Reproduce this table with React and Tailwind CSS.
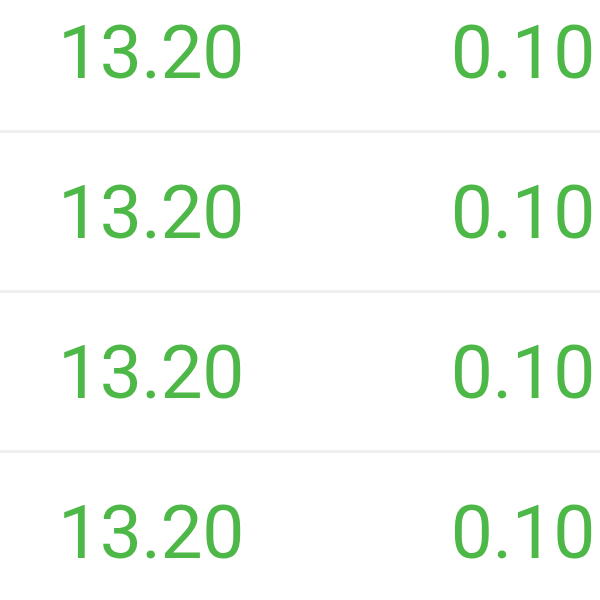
const rows = [
  { price: "13.20", change: "0.10" },
  { price: "13.20", change: "0.10" },
  { price: "13.20", change: "0.10" },
  { price: "13.20", change: "0.10" },
];

export default function App() {
  return (
    <div className="w-[600px] h-[600px] overflow-hidden bg-white">
      <div className="-mt-[27px]">
        {rows.map((row, i) => (
          <div
            key={i}
            className="flex h-[160px] items-center justify-between border-b-[3px] border-[#f0f0f0] pt-[1px] pl-[58px] pr-[5px] text-[75px] leading-none tracking-[-0.5px] text-[#4db847]"
            style={{ fontFamily: 'Roboto, "Liberation Sans", Arial, sans-serif' }}
          >
            <span>{row.price}</span>
            <span>{row.change}</span>
          </div>
        ))}
      </div>
    </div>
  );
}
